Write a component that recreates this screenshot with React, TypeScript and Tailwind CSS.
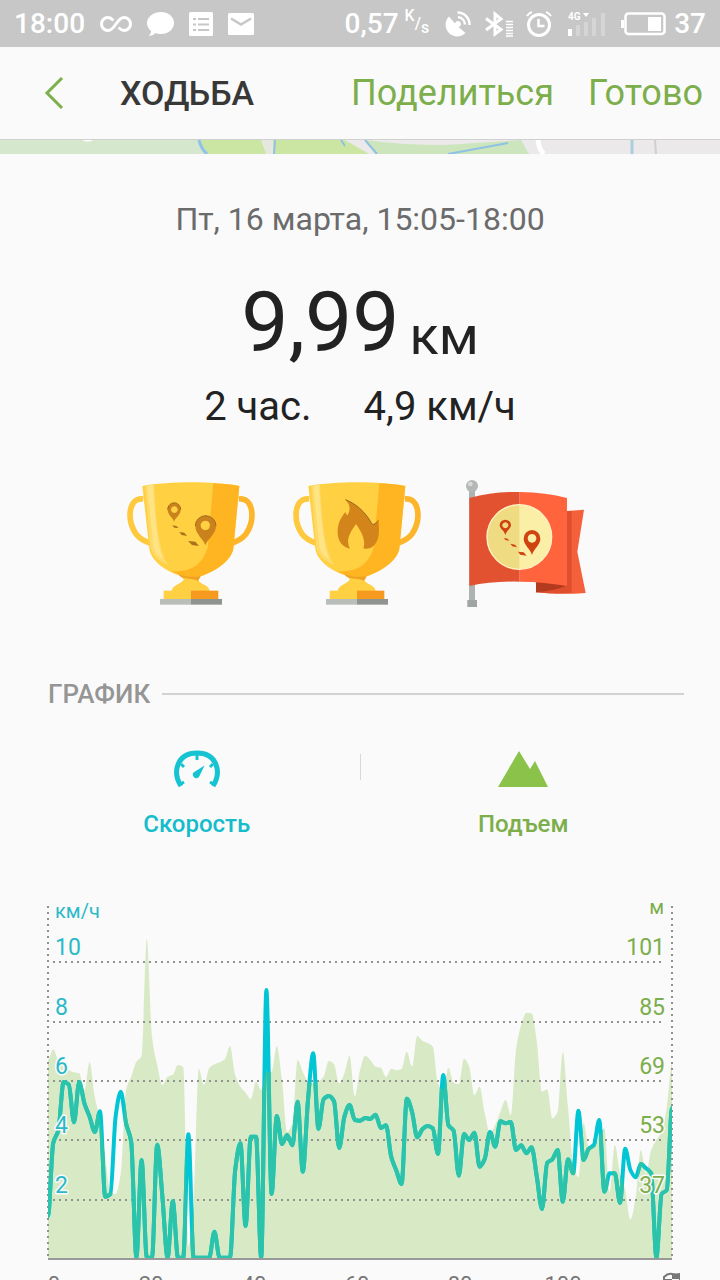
import React from 'react';

// One sample per minute, measured down from the top of the chart in thirds of a unit
const speed = [
    978, 760, 720, 576, 584, 697, 576, 640, 680, 726, 664, 920, 912, 680, 605, 700, 755, 1103, 810, 1103,
    1103, 764, 920, 1103, 934, 1103, 1103, 733, 1103, 1103, 1103, 1103, 1025, 1103, 1103, 1103, 840, 760, 1008, 740,
    740, 1103, 300, 912, 678, 762, 735, 766, 635, 845, 630, 490, 716, 628, 618, 634, 774, 680, 645, 690,
    692, 684, 687, 674, 714, 706, 800, 842, 882, 626, 665, 742, 718, 708, 715, 792, 555, 705, 722, 857,
    732, 750, 728, 830, 806, 726, 770, 694, 700, 696, 780, 766, 790, 772, 860, 957, 818, 808, 780, 935,
    808, 850, 662, 810, 776, 764, 690, 905, 850, 850, 938, 776, 840, 862, 822, 835, 850, 1103, 912, 900,
    655,
];

const elevation = [
    510, 478, 510, 520, 540, 547, 550, 600, 517, 620, 690, 800, 905, 912, 850, 600, 560, 515, 498, 148,
    440, 525, 585, 560, 554, 525, 532, 1070, 940, 537, 585, 535, 523, 517, 508, 468, 555, 590, 608, 627,
    575, 600, 545, 545, 468, 570, 725, 700, 510, 545, 575, 580, 574, 560, 513, 522, 580, 550, 497, 618,
    540, 497, 510, 530, 533, 560, 536, 541, 536, 485, 530, 438, 452, 459, 470, 580, 600, 533, 578, 582,
    506, 530, 615, 590, 670, 730, 705, 665, 630, 675, 480, 405, 368, 370, 455, 605, 598, 685, 665, 485,
    650, 820, 862, 698, 770, 768, 740, 715, 905, 765, 850, 900, 988, 925, 780, 850, 780, 750, 725, 650,
    520,
];

const LEFT = 8;
const STEP = 5.2;

// Monotone cubic curve, so the line never overshoots a sample
function curve(values: number[]) {
    const ys = values.map(v => v / 3);
    const slope = ys.map((y, i) => {
        if (i === 0 || i === ys.length - 1) return 0;
        const before = y - ys[i - 1];
        const after = ys[i + 1] - y;
        return before * after <= 0 ? 0 : (2 * before * after) / (before + after);
    });
    let d = `M${LEFT} ${ys[0].toFixed(1)}`;
    for (let i = 1; i < ys.length; i++) {
        const x0 = LEFT + STEP * (i - 1);
        const x1 = LEFT + STEP * i;
        const c0 = ys[i - 1] + slope[i - 1] / 3;
        const c1 = ys[i] - slope[i] / 3;
        d += `C${(x0 + STEP / 3).toFixed(1)} ${c0.toFixed(1)} ${(x1 - STEP / 3).toFixed(1)} ${c1.toFixed(1)} ${x1.toFixed(1)} ${ys[i].toFixed(1)}`;
    }
    return d;
}

const gridRows = [
    { y: 72, speed: '10', elevation: '101' },
    { y: 132, speed: '8', elevation: '85' },
    { y: 191, speed: '6', elevation: '69' },
    { y: 250, speed: '4', elevation: '53' },
    { y: 310, speed: '2', elevation: '37' },
];

const minutes = [
    { x: 111, label: '20' },
    { x: 214, label: '40' },
    { x: 317, label: '60' },
    { x: 420, label: '80' },
    { x: 523, label: '100' },
];

function StatusBar() {
    return (
        <div className="flex h-[47px] items-center justify-between bg-[#c7c7c7] px-[14px] text-[28px] leading-8 font-medium text-white">
            <div className="flex items-center gap-[15px]">
                <span>18:00</span>
                <svg className="h-5 w-8" viewBox="0 0 32 20" fill="none" stroke="currentColor" strokeWidth="3">
                    <path d="M18.500 13.500c2 2 3.500 3 5.500 3a6.500 6.500 0 0 0 0-13c-3 0-5 2-8 6.500s-5 6.500-8 6.500a6.500 6.500 0 0 1 0-13c2 0 3.500 1 5.500 3" />
                </svg>
                <svg className="h-6 w-[27px]" viewBox="0 0 27 24" fill="currentColor">
                    <path d="M14 0c7 0 13 4.500 13 11s-6 11-13 11c-2 0-4-.3-5.500-1C7 23 4 24 1.500 23.500 3 22.500 4 21 4 19 1.500 17 0 14 0 11 0 4.500 7 0 14 0z" />
                </svg>
                <svg className="h-6 w-6" viewBox="0 0 24 24">
                    <rect width="24" height="24" rx="1.500" fill="currentColor" />
                    <path d="M4 7h3M9 7h11M4 12.500h3M9 12.500h11M4 18h3M9 18h11" stroke="#c7c7c7" strokeWidth="2" />
                </svg>
                <svg className="h-[22px] w-[26px]" viewBox="0 0 26 22">
                    <rect width="26" height="22" rx="1.500" fill="currentColor" />
                    <path d="M3 5.500l10 6 10-6" stroke="#c7c7c7" strokeWidth="2.500" fill="none" />
                </svg>
            </div>
            <div className="flex items-center">
                <span>0,57</span>
                <span className="ml-[6px] flex text-[16px] leading-5">
                    <span className="-mt-1">K</span>
                    <span className="mt-1">/</span>
                    <span className="mt-2">s</span>
                </span>
                <svg className="ml-4 h-[26px] w-[26px]" viewBox="0 0 26 26" fill="currentColor">
                    <path d="M4 5.500A11.500 11.500 0 0 0 20.500 22l-7-6a3 3 0 1 0-3.500-3.500z" />
                    <path d="M13 6a8 8 0 0 1 7 7.500M12.500 1.500a12 12 0 0 1 12 12.500" fill="none" stroke="currentColor" strokeWidth="2.500" />
                </svg>
                <svg className="ml-[14px] h-[26px] w-[28px]" viewBox="0 0 28 26" fill="none" stroke="currentColor">
                    <path d="M1 7.500L16 18.500L10 23V3l6 5L1 19" strokeWidth="3" />
                    <path d="M21 10.500h7M21 13.500h7M21 16.500h7M21 19.500h7M21 22.500h7M21 25h7" strokeWidth="1.500" />
                </svg>
                <svg className="ml-[13px] h-[26px] w-[26px]" viewBox="0 0 26 26" fill="none" stroke="currentColor">
                    <circle cx="13" cy="14" r="10.500" strokeWidth="3" />
                    <path d="M12.500 8v7h6" strokeWidth="2.500" />
                    <path d="M1 5q2-3 5-4M25 5q-2-3-5-4" strokeWidth="2" />
                </svg>
                <svg className="ml-4 h-6 w-[37px]" viewBox="0 0 37 24" fill="currentColor">
                    <text x="0" y="8" fontSize="10" fontWeight="700">4G</text>
                    <path d="M15 1h6l-3 4zM0 17h4v7H0z" />
                    <path d="M8 13h4v11H8zM16 10h4v14h-4zM24 6h4v18h-4zM33 1h4v23h-4z" opacity=".25" />
                </svg>
                <svg className="ml-4 h-6 w-[45px]" viewBox="0 0 45 24" fill="none">
                    <rect x="4.500" y="1.500" width="39" height="20.500" rx="3" stroke="currentColor" strokeWidth="2.500" />
                    <path d="M0 8h3v8H0zM27 5h13v14H27z" fill="currentColor" />
                </svg>
                <span className="ml-2">37</span>
            </div>
        </div>
    );
}

function Header() {
    return (
        <header className="flex h-[93px] items-center border-b border-[#d0d0d0] pl-[44px] pr-[17px]">
            <button type="button" aria-label="Назад" className="text-[#7cb04b]">
                <svg className="h-8 w-5" viewBox="0 0 20 32" fill="none" stroke="currentColor" strokeWidth="3">
                    <path d="M18 1L3 16l15 15" />
                </svg>
            </button>
            <h1 className="ml-14 text-[34px] leading-10 font-medium text-[#383838]">ХОДЬБА</h1>
            <div className="ml-auto flex gap-[34px] text-[36px] leading-10 text-[#7cae4b]">
                <button type="button">Поделиться</button>
                <button type="button">Готово</button>
            </div>
        </header>
    );
}

function MapStrip() {
    return (
        <svg className="block h-[14px] w-full" viewBox="0 0 720 14" preserveAspectRatio="none" fill="none">
            <rect width="720" height="14" fill="#ebe9e9" />
            <path d="M0 0h200l8 14H0z" fill="#d5e8cd" />
            <path d="M199 0h146l24 14H207z" fill="#cbe6a3" />
            <path d="M365 0q60 8 110 3l46-3 8 14H375z" fill="#cde5bd" />
            <path d="M261 0h12l1 14h-8z" fill="#e6e8df" />
            <path d="M199 0q2 9 8 14" stroke="#8ec1ee" strokeWidth="3" />
            <path d="M274 14l1-14M341 0l4 6M365 0l12 14M448 14l60-11" stroke="#8ec1e4" strokeWidth="2" />
            <path d="M632 0v14" stroke="#a9cfdc" strokeWidth="3" />
            <path d="M82 0q6 3 11 0" fill="#fff" />
            <path d="M538 0q1 10 6 14" stroke="#fff" strokeWidth="5" />
            <path d="M655 0l1 14" stroke="#d0cfd0" strokeWidth="2" />
        </svg>
    );
}

function Trophy({ children }: { children: React.ReactNode }) {
    return (
        <svg className="h-32 w-[136px]" viewBox="48 42 408 384">
            <path d="M100 102C54 96 50 165 78 207c12 15 26 22 42 27" fill="none" stroke="#ffc93d" strokeWidth="17" />
            <path d="M386 102c46-6 50 63 22 105-12 15-26 22-42 27" fill="none" stroke="#fdb62c" strokeWidth="17" />
            <path d="M97 63C180 48 310 48 388 63l-18 188c-6 35-53 68-97 82l-8 13c3 11 33 14 34 32H185c2-18 35-24 36-35l-12-12c-45-14-86-45-91-80z" fill="#ffd042" />
            <path d="M310 55q45 2 78 8l-18 188c-6 35-53 68-97 82-20 5-48 4-64-2l-25-13c65 5 95-25 109-70z" fill="#ffb421" />
            <path d="M204 328c24 9 48 8 68 5l-8 15c-15-10-40-5-52-13z" fill="#f0a322" />
            <path d="M106 62l26-3c5 80 9 190 42 240-30-10-48-30-53-53z" fill="#ffda68" />
            <path d="M112 62l17-2c5 80 11 180 30 221-18-10-25-20-28-35z" fill="#ffe486" />
            <path d="M161 377h82v25h-82z" fill="#ffd042" />
            <path d="M243 377h82v25h-82z" fill="#f6991f" />
            <path d="M150 402h93v17h-93z" fill="#b9beba" />
            <path d="M243 402h93v17h-93z" fill="#909490" />
            {children}
        </svg>
    );
}

function RouteMark() {
    return (
        <g fill="#ca831c">
            <path fillRule="evenodd" d="M192 170c-3-13-19-20-19-36a19 20 0 0 1 39 0c0 16-16 23-20 36zM193 124a10 10 0 1 0 .1 0z" />
            <path fillRule="evenodd" d="M286 241c-5-19-30-33-30-58a31 31 0 0 1 62 0c0 25-26 39-32 58zM286 167a14 14 0 1 0 .1 0z" />
            <path d="M187 181l12 2 7 6-13-1zM208 201l15 2 8 10-16-3zM234 228l22 2 11 13-21-3z" fill="#a9711c" />
            <path d="M173 134a19 20 0 0 1 39 0M256 183a31 31 0 0 1 62 0" fill="none" stroke="#a0691b" strokeWidth="3" />
        </g>
    );
}

function FlameMark() {
    return (
        <g>
            <path d="M208 104c28 10 60 35 79 72 7 6 14-3 20-10 4 34 4 68-22 82-10 4-19 4-23 2 8-22-4-48-22-73-18 25-32 48-18 74-18-4-31-14-36-37-4-30 4-50 22-73 2 6 4 8 6 10 10-15 10-32-6-47z" fill="#d3851b" />
            <path d="M208 104c28 10 60 35 79 72 7 6 14-3 20-10" fill="none" stroke="#99651b" strokeWidth="3" />
        </g>
    );
}

function FlagAward() {
    return (
        <svg className="h-32 w-[136px]" viewBox="24 42 408 384">
            <path d="M57 75h18v335H57z" fill="#aeb2b1" />
            <path d="M52 405h29v21H52z" fill="#a0a4a3" />
            <circle cx="66" cy="63" r="18" fill="#b3b7b6" />
            <circle cx="61" cy="57" r="7" fill="#d8dad9" />
            <path d="M258 340l93-20V138l51-4-20 126 25 124q-80 6-149-2z" fill="#f4603a" />
            <path d="M351 138h14v246q-60 3-107-2v-30z" fill="#e04f2d" />
            <path d="M258 352l93 10q-35 14-93 20z" fill="#b23a1e" />
            <path d="M58 99q75-20 151-18v269q-80-2-151 13z" fill="#e25230" />
            <path d="M209 81q80 2 142 18v264q-65-13-142-13z" fill="#ff643c" />
            <circle cx="208" cy="216" r="97" fill="#fbeea7" />
            <path d="M208 119a97 97 0 0 0 0 194z" fill="#efdc82" />
            <circle cx="208" cy="216" r="97" fill="none" stroke="#fff3c5" strokeWidth="4" />
            <g fill="#d0420f">
                <path fillRule="evenodd" d="M166 210c-3-13-17-19-17-29a17 17 0 0 1 34 0c0 10-14 16-17 29zM166 172a9 9 0 1 0 .1 0z" />
                <path fillRule="evenodd" d="M246 270c-5-19-25-30-25-49a25 26 0 0 1 50 0c0 19-20 30-25 49zM246 207a13 13 0 1 0 .1 0z" />
                <path d="M162 219l11 2 5 6-12-2zM181 236l14 3 6 8-14-3zM204 260l17 2 9 10-19-3z" />
            </g>
        </svg>
    );
}

function GaugeIcon() {
    return (
        <svg className="h-[38px] w-12" viewBox="0 0 48 38">
            <path d="M8 36C-1 22 4 3 24 3s25 19 16 33" fill="none" stroke="#15c3d3" strokeWidth="5" />
            <path d="M24 4v6M8 14l3 3M40 14l-3 3M6 35l5-3M42 35l-5-3" stroke="#15c3d3" strokeWidth="3" />
            <path d="M31.500 15.500l-5 10.500a3.500 3.500 0 1 1-6-3.500z" fill="#15c3d3" />
        </svg>
    );
}

function MountainIcon() {
    return (
        <svg className="h-[38px] w-[50px]" viewBox="0 0 50 38" fill="#8bc34a">
            <path d="M0 37L21 1l11 18 5-8 13 26z" />
        </svg>
    );
}

function ActivityChart() {
    const speedLine = curve(speed);
    const elevationArea = `${curve(elevation)}V368H${LEFT}Z`;

    return (
        <svg className="block w-full" viewBox="0 0 640 410" fontSize="23" role="img" aria-label="График">
            <clipPath id="plot">
                <rect x="8" y="0" width="624" height="369" />
            </clipPath>
            <clipPath id="under">
                <path d={elevationArea} />
            </clipPath>
            <path d={elevationArea} fill="#d8e9c5" />
            <g stroke="#8f938b" strokeWidth="2" strokeDasharray="2 4">
                {gridRows.map(row => (
                    <path key={row.y} d={`M13 ${row.y}H622`} />
                ))}
                <path d="M8 16V368M632 16V368" />
            </g>
            {/* The part of the line inside the elevation area takes a greener tone */}
            <g clipPath="url(#plot)" fill="none" strokeWidth="4" strokeLinejoin="round">
                <path d={speedLine} stroke="#00c5d5" />
                <path d={speedLine} clipPath="url(#under)" stroke="#2bc4aa" />
            </g>
            <path d="M8 369H632" stroke="#999" strokeWidth="2" />

            <text x="15" y="28" fontSize="20" fill="#2bb9c8">км/ч</text>
            <text x="624" y="24" fontSize="20" fill="#7cae4b" textAnchor="end">м</text>
            <g stroke="#fafafa" strokeWidth="3" paintOrder="stroke" strokeLinejoin="round">
                {gridRows.map(row => (
                    <React.Fragment key={row.y}>
                        <text x="15" y={row.y - 7} fill="#2bb9c8">{row.speed}</text>
                        <text x="625" y={row.y - 7} fill="#7cae4b" textAnchor="end">{row.elevation}</text>
                    </React.Fragment>
                ))}
            </g>

            <g fontSize="22" fill="#777" textAnchor="middle">
                <text x="14" y="402">0</text>
                {minutes.map(m => (
                    <text key={m.label} x={m.x} y="402">{m.label}</text>
                ))}
            </g>
            <g stroke="#777" strokeWidth="2" fill="none">
                <path d="M624 402V387q4-4 8-3t8 0v12h-8q-4 0-8 2" />
                <path d="M632 384v5h-7v5h7v-5h7v-5z" fill="#777" stroke="none" />
            </g>
        </svg>
    );
}

export default function App() {
    return (
        <div className="h-screen overflow-hidden bg-[#fafafa] font-['Roboto','Noto_Sans',sans-serif]">
            <StatusBar />
            <Header />
            <MapStrip />
            <main>
                <section className="flex flex-col items-center pt-[45px]">
                    <p className="text-[32px] leading-10 text-[#6b6b6b]">Пт, 16 марта, 15:05-18:00</p>
                    <p className="mt-9 flex items-end gap-[10px] text-[#222]">
                        <span className="text-[84px] leading-[96px]">9,99</span>
                        <span className="text-[54px] leading-[70px]">км</span>
                    </p>
                    <p className="mt-3 flex gap-[52px] text-[40px] leading-12 text-[#222]">
                        <span>2 час.</span>
                        <span>4,9 км/ч</span>
                    </p>
                    <div className="mt-12 flex gap-[30px]">
                        <Trophy><RouteMark /></Trophy>
                        <Trophy><FlameMark /></Trophy>
                        <FlagAward />
                    </div>
                </section>

                <section className="mt-[71px]">
                    <div className="flex items-center gap-3 pl-12 pr-9">
                        <h2 className="text-[26px] leading-8 font-medium text-[#959595]">ГРАФИК</h2>
                        <div className="h-[2px] flex-1 bg-[#d2d2d2]"></div>
                    </div>
                    <div className="mt-10 flex px-[34px] text-[24px] leading-8 font-medium">
                        <button type="button" className="flex flex-1 flex-col items-center gap-5 text-[#15bccb]">
                            <GaugeIcon />
                            Скорость
                        </button>
                        <div className="mt-1 h-[26px] w-px bg-[#d8d8d8]"></div>
                        <button type="button" className="flex flex-1 flex-col items-center gap-5 text-[#7cae4b]">
                            <MountainIcon />
                            Подъем
                        </button>
                    </div>
                    <div className="mt-[50px] px-10">
                        <ActivityChart />
                    </div>
                </section>
            </main>
        </div>
    );
}
